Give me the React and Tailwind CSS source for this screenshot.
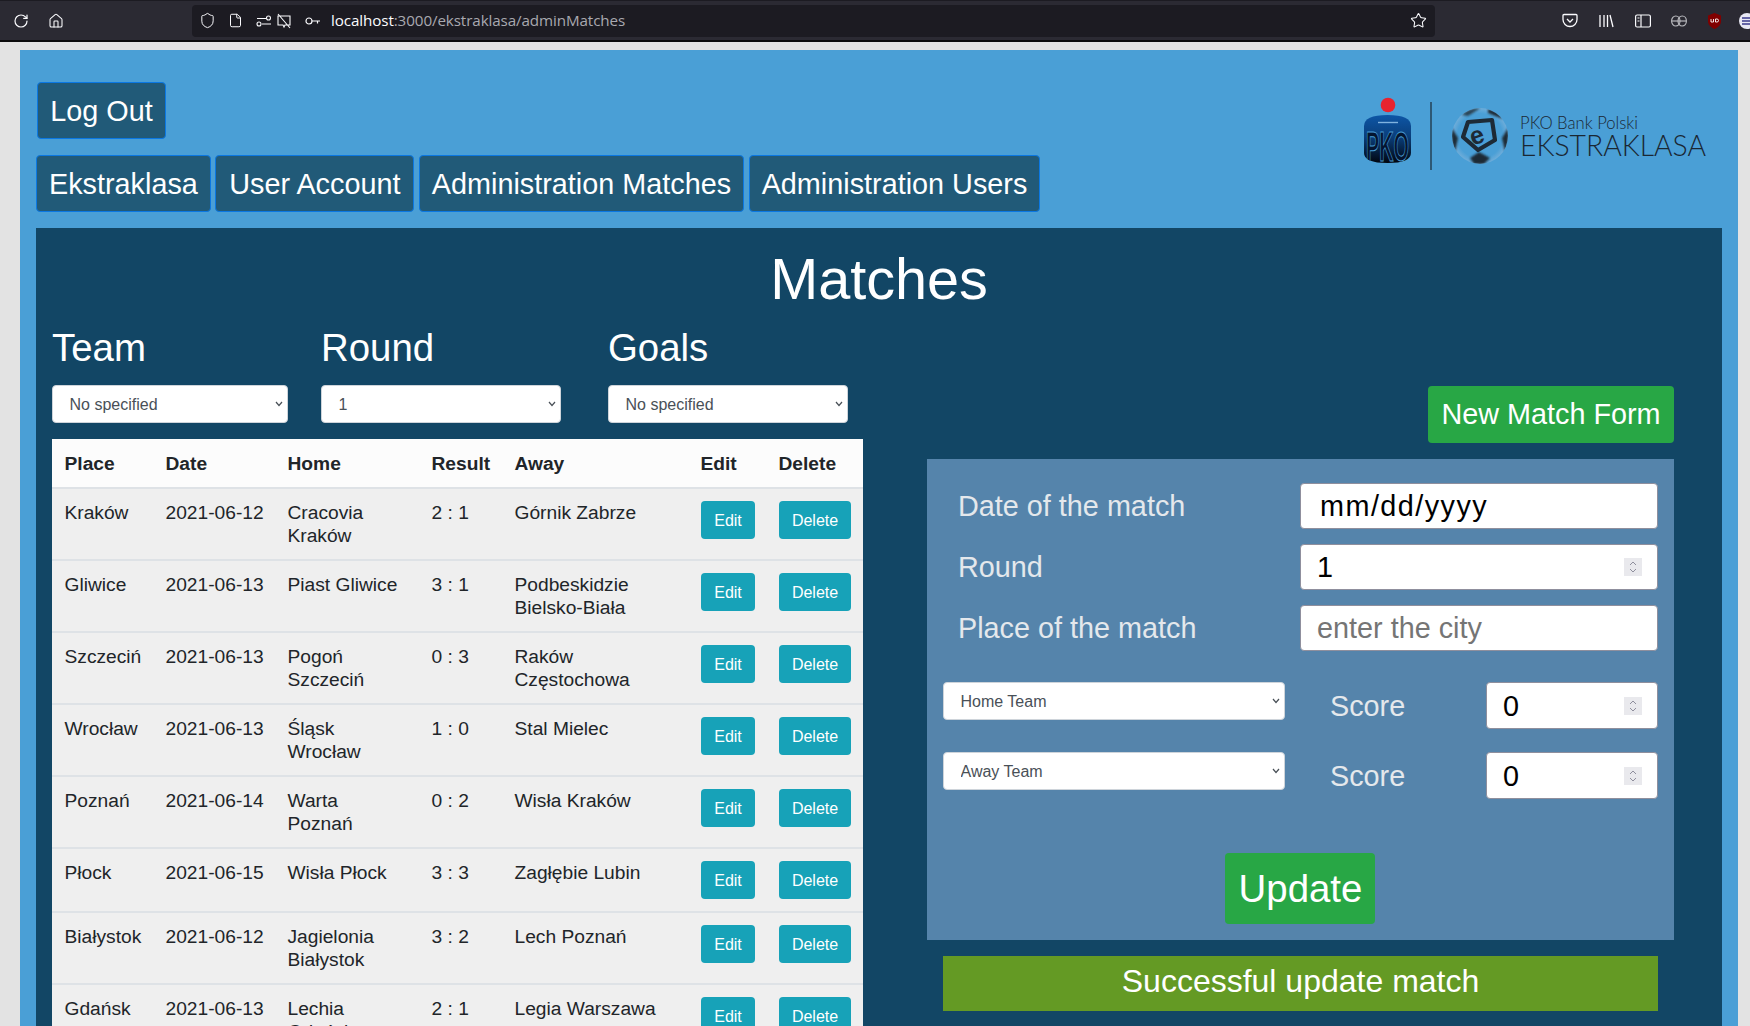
import { RotateCw, Home, Shield, File, Star } from "lucide-react"

const matches = [
  { place: "Kraków", date: "2021-06-12", home: ["Cracovia", "Kraków"], result: "2 : 1", away: ["Górnik Zabrze"] },
  { place: "Gliwice", date: "2021-06-13", home: ["Piast Gliwice"], result: "3 : 1", away: ["Podbeskidzie", "Bielsko-Biała"] },
  { place: "Szczeciń", date: "2021-06-13", home: ["Pogoń", "Szczeciń"], result: "0 : 3", away: ["Raków", "Częstochowa"] },
  { place: "Wrocław", date: "2021-06-13", home: ["Śląsk", "Wrocław"], result: "1 : 0", away: ["Stal Mielec"] },
  { place: "Poznań", date: "2021-06-14", home: ["Warta", "Poznań"], result: "0 : 2", away: ["Wisła Kraków"] },
  { place: "Płock", date: "2021-06-15", home: ["Wisła Płock"], result: "3 : 3", away: ["Zagłębie Lubin"] },
  { place: "Białystok", date: "2021-06-12", home: ["Jagielonia", "Białystok"], result: "3 : 2", away: ["Lech Poznań"] },
  { place: "Gdańsk", date: "2021-06-13", home: ["Lechia", "Gdańsk"], result: "2 : 1", away: ["Legia Warszawa"] },
]

const NavButton = ({ children, className = "" }) => (
  <button className={`h-[57px] px-3 pt-[2px] rounded border border-[#0b78e3] bg-[#215a78] text-white text-[28.8px] leading-[43px] whitespace-nowrap ${className}`}>
    {children}
  </button>
)

const Spinner = () => (
  <div className="absolute right-[16px] top-1/2 -translate-y-1/2 w-[18px] h-[18px] bg-[#e9e9ed] flex items-center justify-center">
    <svg width="10" height="14" viewBox="0 0 10 14" fill="none" stroke="#8f8f9d" strokeWidth="1">
      <path d="M2 5l3-3 3 3M2 9l3 3 3-3" />
    </svg>
  </div>
)

const Select = ({ value, className = "" }) => (
  <div className={`relative h-[38px] ${className}`}>
    <select className="appearance-none w-full h-full pl-[16.5px] pt-[2px] rounded bg-white border border-[#ced4da] text-[16px] text-[#495057]">
      <option>{value}</option>
    </select>
    <svg width="8" height="6" viewBox="0 0 8 6" fill="none" stroke="#495057" strokeWidth="1.2" className="absolute right-[5px] top-[16px] pointer-events-none">
      <path d="M1 1l3 3.500L7 1" />
    </svg>
  </div>
)

const Filter = ({ label, value, width, gap }) => (
  <div className={`${width} ${gap}`}>
    <div className="text-[38.4px] leading-[46px] text-white">{label}</div>
    <Select value={value} className="mt-[14px] w-full" />
  </div>
)

const ScoreRow = ({ team, className }) => (
  <div className={`flex ${className}`}>
    <Select value={team} className="w-[342px]" />
    <div className="ml-[45px] w-[156px] h-[47px] pt-[3px] flex items-center text-[28.8px] text-[#e4e8ec]">Score</div>
    <div className="relative w-[172px]">
      <input
        type="number"
        defaultValue="0"
        className="w-full h-[47px] pl-4 pt-[1px] bg-white border border-[#8f8f9d] rounded-sm text-[28.8px] text-black"
      />
      <Spinner />
    </div>
  </div>
)

const FormRow = ({ label, children }) => (
  <div className="flex items-center h-[46px]">
    <div className="w-[342px] pt-[2px] text-[28.8px] text-[#e4e8ec]">{label}</div>
    <div className="relative w-[358px]">{children}</div>
  </div>
)

const Logo = () => (
  <svg width="350" height="80" viewBox="1360 95 350 80" className="mt-[45px] mr-[28px]">
    <defs>
      <linearGradient id="pko" x1="0" y1="0" x2="0" y2="1">
        <stop offset="0" stopColor="#0d56a6" />
        <stop offset="0.45" stopColor="#0a3f7c" />
        <stop offset="1" stopColor="#01060f" />
      </linearGradient>
      <radialGradient id="ball" cx="0.5" cy="0.5" r="0.5">
        <stop offset="0.8" stopColor="#4a9fd6" />
        <stop offset="1" stopColor="#6fadd9" />
      </radialGradient>
      <clipPath id="body">
        <path d="M1364 126Q1364 115 1387.500 115Q1411 115 1411 126V153Q1411 163 1387.500 163Q1364 163 1364 153Z" />
      </clipPath>
      <clipPath id="ballClip">
        <circle cx="1480" cy="136" r="28" />
      </clipPath>
      <filter id="soft">
        <feGaussianBlur stdDeviation="0.9" />
      </filter>
    </defs>
    <circle cx="1388" cy="105" r="7.300" fill="#e8232f" />
    <path d="M1364 126Q1364 115 1387.500 115Q1411 115 1411 126V153Q1411 163 1387.500 163Q1364 163 1364 153Z" fill="url(#pko)" />
    <path d="M1378 122.500H1398" stroke="#7fb2df" strokeWidth="1.400" />
    <g clipPath="url(#body)">
      <text
        transform="translate(1366 161) scale(0.47 1)"
        fontFamily="Liberation Sans"
        fontWeight="700"
        fontSize="42"
        fill="#041530"
        stroke="#4a9fd6"
        strokeWidth="1"
      >
        PKO
      </text>
    </g>
    <rect x="1430" y="102" width="2" height="68" fill="#2d5875" />
    <circle cx="1480" cy="136" r="28" fill="url(#ball)" />
    <g clipPath="url(#ballClip)" fill="#1d2a36" filter="url(#soft)">
      <path d="M1462 115Q1468 108 1480 108Q1476 111 1468 116Z" opacity="0.8" />
      <path d="M1488 109Q1500 111 1503 119Q1495 116 1488 113Z" />
      <path d="M1452 128L1458 138L1455 152Q1450 140 1452 128Z" />
      <path d="M1508 128L1502 138L1505 152Q1510 140 1508 128Z" />
      <path d="M1470 158L1479 152L1490 158L1484 164H1474Z" />
    </g>
    <path d="M1468 122L1492 120L1495 140L1478 150L1463 137Z" fill="none" stroke="#1d2a36" strokeWidth="4.200" strokeLinejoin="round" />
    <text
      x="1470"
      y="143"
      fontFamily="Liberation Sans"
      fontWeight="700"
      fontSize="25"
      fill="#1d2a36"
      transform="rotate(-20 1479 136)"
    >
      e
    </text>
    <text x="1520" y="129" fontFamily="Lato" fontWeight="300" fontSize="18" textLength="118" lengthAdjust="spacingAndGlyphs" fill="#1a2733">
      PKO Bank Polski
    </text>
    <text x="1520" y="156" fontFamily="Lato" fontWeight="300" fontSize="29" textLength="186" lengthAdjust="spacingAndGlyphs" fill="#1a2733">
      EKSTRAKLASA
    </text>
  </svg>
)

const Toolbar = () => (
  <div className="h-[42px] bg-[#2b2a33] border-t border-t-[#1c1b22] border-b-2 border-b-[#0c0c0d] flex items-center text-[#fbfbfe] overflow-hidden">
    <RotateCw size={16} strokeWidth={1.8} className="ml-[13px] shrink-0" />
    <Home size={16} strokeWidth={1.6} className="ml-[19px] shrink-0" />
    <div className="ml-[128px] w-[1243px] shrink-0 h-[32px] rounded bg-[#1c1b22] flex items-center pl-[7px]">
      <Shield size={17} strokeWidth={1.4} />
      <File size={15} strokeWidth={1.6} className="ml-[12px]" />
      <svg width="16" height="14" viewBox="0 0 16 14" fill="none" stroke="#fbfbfe" strokeWidth="1.100" className="ml-[13px]">
        <path d="M1 4.500h9M6 10h9" />
        <circle cx="12.500" cy="4" r="2" />
        <circle cx="3" cy="10" r="2" />
      </svg>
      <svg width="16" height="16" viewBox="0 0 16 16" fill="none" stroke="#fbfbfe" strokeWidth="1.100" className="ml-[4px]">
        <path d="M2 3h12v9H9l-1 2-1-2H2zM2 1l12 14" />
      </svg>
      <svg width="16" height="10" viewBox="0 0 16 10" fill="none" stroke="#fbfbfe" strokeWidth="1.200" className="ml-[13px]">
        <circle cx="4" cy="5" r="3" />
        <path d="M7 5h8M12.500 5v2.500" />
      </svg>
      <div className="ml-[10px] font-['Open_Sans',sans-serif] text-[15.200px] text-[#a9a9b0] whitespace-nowrap tracking-[-0.1px]">
        <span className="text-[#fbfbfe]">localhost</span>:3000/ekstraklasa/adminMatches
      </div>
      <Star size={17} strokeWidth={1.5} className="ml-auto mr-[8px]" />
    </div>
    <svg width="16" height="15" viewBox="0 0 16 15" fill="none" stroke="#fbfbfe" strokeWidth="1.300" className="ml-[127px] shrink-0">
      <path d="M2 1.500h12a1 1 0 0 1 1 1v4a7 7 0 0 1-14 0v-4a1 1 0 0 1 1-1zM5 6l3 3 3-3" />
    </svg>
    <svg width="15" height="14" viewBox="0 0 15 14" fill="none" stroke="#fbfbfe" strokeWidth="1.300" className="ml-[21px] shrink-0">
      <path d="M1 1v12M5 1v12M8.500 1v12M11 1l3 12" />
    </svg>
    <svg width="16" height="14" viewBox="0 0 16 14" fill="none" stroke="#fbfbfe" strokeWidth="1.200" className="ml-[21px] shrink-0">
      <rect x="0.600" y="1" width="14.800" height="12" rx="1.500" />
      <path d="M6 1v12M2.500 4h2M2.500 7h2" />
    </svg>
    <svg width="16" height="12" viewBox="0 0 16 12" fill="none" stroke="#b8b8bd" strokeWidth="1.200" className="ml-[20px] shrink-0">
      <ellipse cx="4.800" cy="6" rx="4.200" ry="5" />
      <ellipse cx="11.200" cy="6" rx="4.200" ry="5" />
      <path d="M1 6h14" />
    </svg>
    <svg width="15" height="16" viewBox="0 0 15 16" className="ml-[20px] shrink-0">
      <path d="M7.500 0L14 2.500V8c0 4-3 6.500-6.500 8C4 14.500 1 12 1 8V2.500z" fill="#800000" />
      <path d="M4 6v3h2.500V6M8.500 6v3h1.500a1.500 1.500 0 0 0 0-3z" fill="none" stroke="#fff" strokeWidth="0.900" />
    </svg>
    <svg width="16" height="16" viewBox="0 0 16 16" className="ml-[17px] shrink-0">
      <circle cx="8" cy="8" r="8" fill="#e8e8f4" />
      <path d="M3 5h10M3 8h10M3 11h10" stroke="#3a3a8c" strokeWidth="1.600" />
    </svg>
  </div>
)

const cell = "pl-[12.5px] pr-2 pt-3 pb-3"

const App = () => {
  return (
    <div className="h-screen overflow-hidden bg-[#e3e3e3] font-['Liberation_Sans',Arial,sans-serif]">
      <Toolbar />
      <div className="mt-[8px] ml-[20px] w-[1718px] bg-[#4a9fd6] min-h-[976px]">
        <div className="flex justify-between">
          <div className="pt-[32px] pl-[16px]">
            <div className="pl-[1px]">
              <NavButton className="min-w-[129px]">Log Out</NavButton>
            </div>
            <div className="mt-[16px] flex gap-[4.5px]">
              <NavButton>Ekstraklasa</NavButton>
              <NavButton className="min-w-[199px]">User Account</NavButton>
              <NavButton>Administration Matches</NavButton>
              <NavButton>Administration Users</NavButton>
            </div>
          </div>
          <Logo />
        </div>

        <div className="mt-[16px] mx-[16px] bg-[#124665] pt-[17px] pb-8">
          <h1 className="text-center text-[57.6px] leading-[69px] text-white">Matches</h1>
          <div className="flex pl-[16px] pr-[48px] gap-[64px]">
            <div className="w-[811px] shrink-0">
              <div className="mt-[11px] flex">
                <Filter label="Team" value="No specified" width="w-[236px]" gap="mr-[33px]" />
                <Filter label="Round" value="1" width="w-[240px]" gap="mr-[47px]" />
                <Filter label="Goals" value="No specified" width="w-[240px]" gap="" />
              </div>
              <table className="mt-[16px] w-[811px] table-fixed border-collapse text-[19.2px] leading-[23px] text-[#212529]">
                <colgroup>
                  <col className="w-[101px]" />
                  <col className="w-[122px]" />
                  <col className="w-[144px]" />
                  <col className="w-[83px]" />
                  <col className="w-[186px]" />
                  <col className="w-[78px]" />
                  <col className="w-[97px]" />
                </colgroup>
                <thead className="bg-[#fcfcfc]">
                  <tr className="h-[49px] border-b-2 border-[#dee2e6] text-left">
                    {["Place", "Date", "Home", "Result", "Away", "Edit", "Delete"].map((h) => (
                      <th key={h} className="pl-[12.5px] pr-0 font-bold whitespace-nowrap">
                        {h}
                      </th>
                    ))}
                  </tr>
                </thead>
                <tbody className="bg-[#efefef]">
                  {matches.map((m) => (
                    <tr key={m.place} className="border-b-2 border-[#dee2e6] align-top">
                      <td className={cell}>{m.place}</td>
                      <td className={`${cell} whitespace-nowrap`}>{m.date}</td>
                      <td className={cell}>
                        {m.home.map((line) => (
                          <div key={line}>{line}</div>
                        ))}
                      </td>
                      <td className={cell}>{m.result}</td>
                      <td className={cell}>
                        {m.away.map((line) => (
                          <div key={line}>{line}</div>
                        ))}
                      </td>
                      <td className={cell}>
                        <button className="block ml-[0.5px] w-[54px] h-[38px] rounded bg-[#17a2b8] text-white text-[16px]">Edit</button>
                      </td>
                      <td className={cell}>
                        <button className="block ml-[0.5px] w-[72px] h-[38px] rounded bg-[#17a2b8] text-white text-[16px]">Delete</button>
                      </td>
                    </tr>
                  ))}
                </tbody>
              </table>
            </div>

            <div className="w-[747px] pt-[72px]">
              <div className="flex justify-end">
                <button className="h-[57px] w-[246px] rounded bg-[#28a745] text-white text-[28.8px]">New Match Form</button>
              </div>
              <div className="mt-[16px] h-[481px] bg-[#5584ab] pt-[24px]">
                <div className="pl-[31px] flex flex-col gap-[15px]">
                  <FormRow label="Date of the match">
                    <input
                      type="text"
                      defaultValue="mm/dd/yyyy"
                      className="w-full h-[46px] pl-[19px] bg-white border border-[#8f8f9d] rounded-sm text-[28.8px] tracking-[1.45px] text-black"
                    />
                  </FormRow>
                  <FormRow label="Round">
                    <input
                      type="number"
                      defaultValue="1"
                      className="w-full h-[46px] pl-4 pt-[1px] bg-white border border-[#8f8f9d] rounded-sm text-[28.8px] text-black"
                    />
                    <Spinner />
                  </FormRow>
                  <FormRow label="Place of the match">
                    <input
                      type="text"
                      placeholder="enter the city"
                      className="w-full h-[46px] pl-4 pt-[1px] bg-white border border-[#8f8f9d] rounded-sm text-[28.8px] text-black placeholder:text-[#757575]"
                    />
                  </FormRow>
                </div>
                <div className="pl-[16px]">
                  <ScoreRow team="Home Team" className="mt-[31px]" />
                  <ScoreRow team="Away Team" className="mt-[23px]" />
                </div>
                <div className="mt-[54px] pr-[2px] flex justify-center">
                  <button className="w-[150px] h-[71px] pl-[2px] rounded bg-[#28a745] text-white text-[38.4px]">Update</button>
                </div>
              </div>
              <div className="mt-[16px] mx-[16px] h-[55px] pb-[6px] bg-[#649a24] flex items-center justify-center text-white text-[32px]">
                Successful update match
              </div>
            </div>
          </div>
        </div>
      </div>
    </div>
  )
}

export default App
